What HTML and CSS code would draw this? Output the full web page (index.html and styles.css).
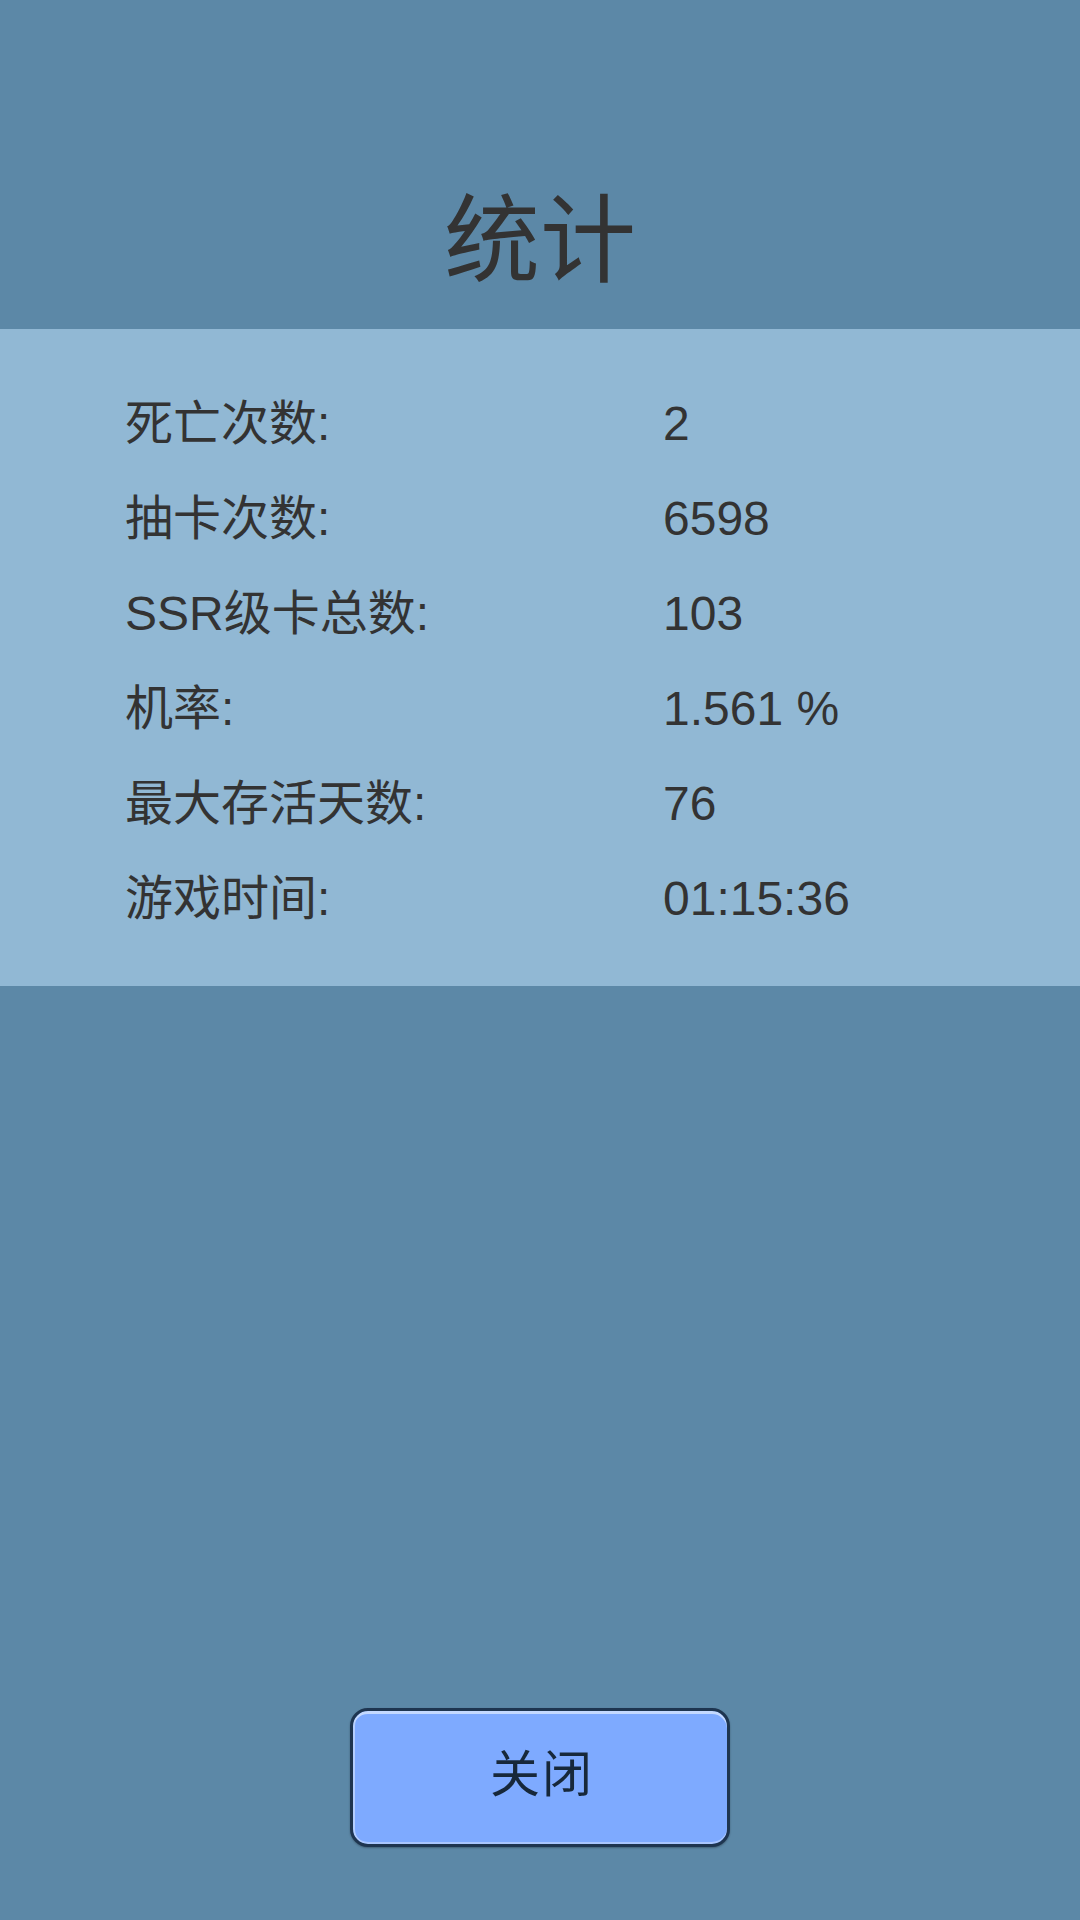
FILE: index.html
```html
<!DOCTYPE html>
<html>
<head>
  <meta charset="utf-8">
  <title>统计</title>
  <link rel="stylesheet" href="styles.css">
</head>
<body>
  <div class="page">
    <div class="header">
      <h1 class="title">统计</h1>
    </div>

    <!-- Tableau des statistiques -->
    <div class="panel">
      <div class="row"><span class="label">死亡次数:</span><span class="value">2</span></div>
      <div class="row"><span class="label">抽卡次数:</span><span class="value">6598</span></div>
      <div class="row"><span class="label">SSR级卡总数:</span><span class="value">103</span></div>
      <div class="row"><span class="label">机率:</span><span class="value">1.561 %</span></div>
      <div class="row"><span class="label">最大存活天数:</span><span class="value">76</span></div>
      <div class="row"><span class="label">游戏时间:</span><span class="value">01:15:36</span></div>
    </div>

    <div class="footer">
      <button class="close-button" type="button">关闭</button>
    </div>
  </div>
</body>
</html>
```

FILE: styles.css
```css
/* Styles CSS */
body {
  margin: 0;
  background-color: #5c88a7;
  font-family: "Liberation Sans", "Noto Sans CJK SC", sans-serif;
  color: #333333;
}

.page {
  display: flex;
  flex-direction: column;
  height: 1920px;
}

.header {
  height: 329px;
  box-sizing: border-box;
  padding-top: 185px;
  text-align: center;
}

.title {
  margin: 0;
  font-family: "Noto Sans CJK SC", sans-serif;
  font-size: 96px;
  font-weight: normal;
  line-height: 96px;
}

.panel {
  background-color: #91b8d4;
  padding: 47px 0 40px 125px;
}

.row {
  display: flex;
  height: 95px;
  font-size: 48px;
  line-height: 95px;
}

.label {
  width: 538px;
}

/* Bouton de fermeture en bas */
.footer {
  flex: 1;
  display: flex;
  justify-content: center;
  align-items: flex-end;
  padding-bottom: 73px;
}

.close-button {
  width: 380px;
  height: 139px;
  padding: 0 0 16px 4px;
  background-color: #7eaaff;
  border: 3px solid #1e3550;
  border-radius: 18px;
  box-shadow: inset 0 3px 0 #c4d9ff, inset 2px 0 0 #b4ceff, inset 0 -2px 0 #a9c6ff, 0 1px 2px rgba(0, 0, 0, 0.3);
  font-family: "Noto Sans CJK SC", sans-serif;
  font-size: 50px;
  letter-spacing: 2px;
  color: #17283a;
  cursor: pointer;
}
```
